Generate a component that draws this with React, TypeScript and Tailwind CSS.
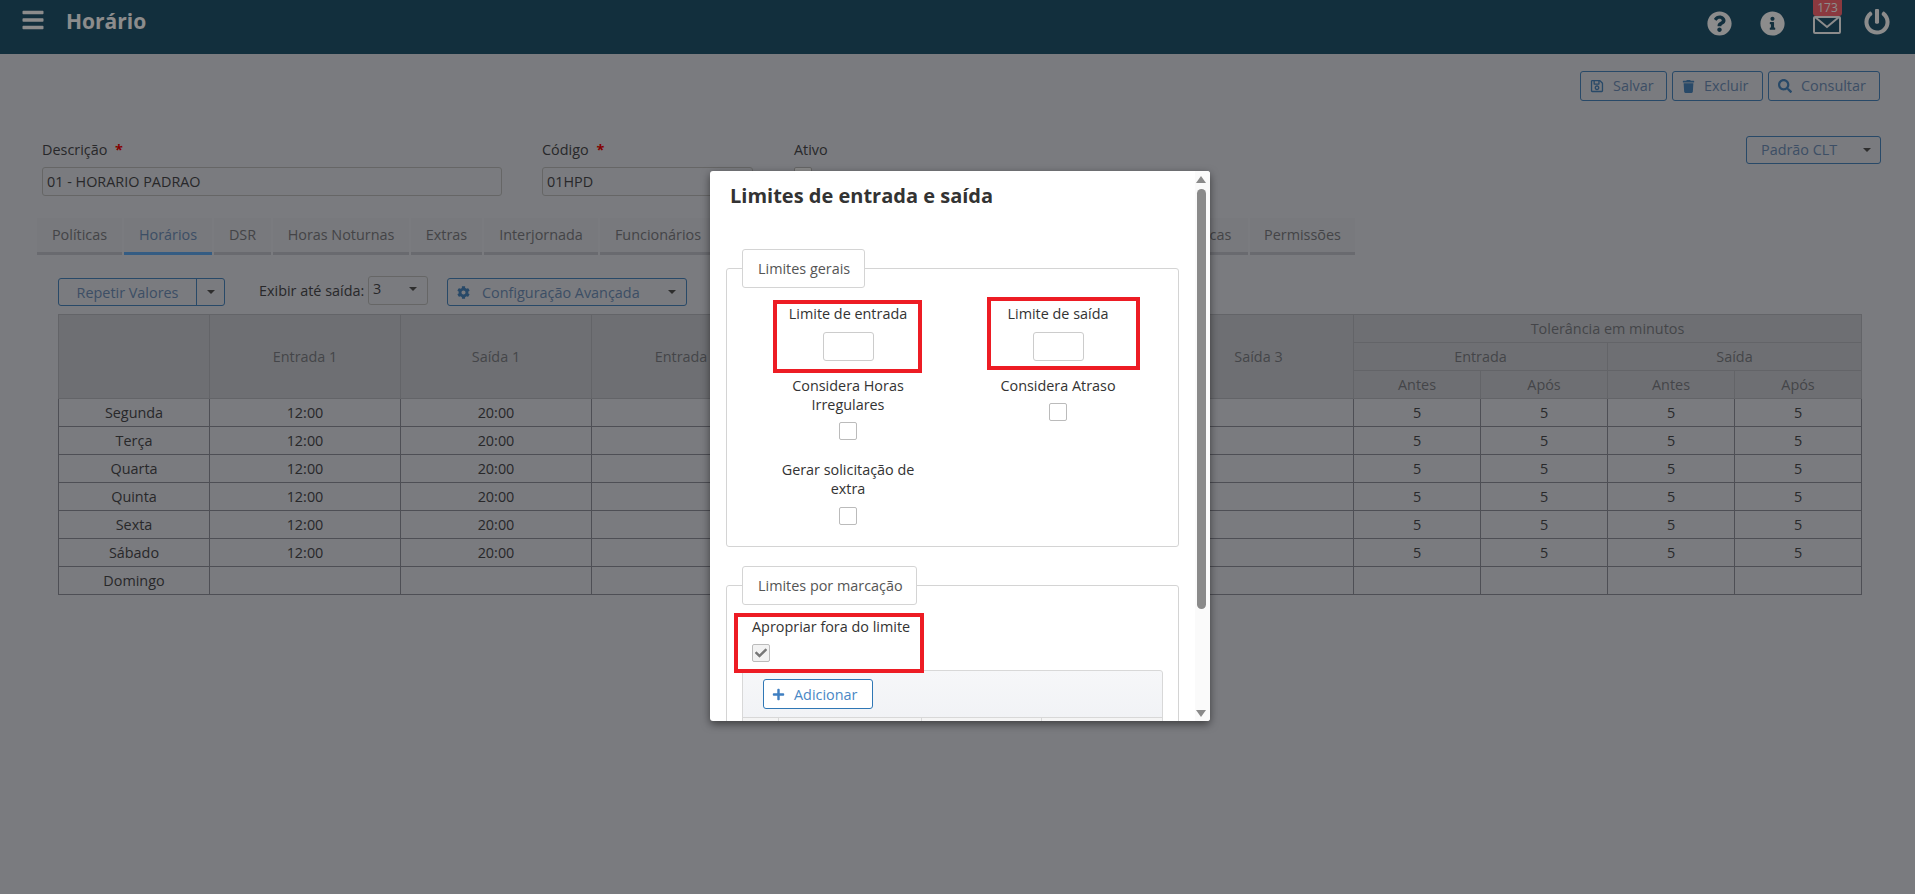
import { FaBars, FaCheck, FaCog, FaInfoCircle, FaPlus, FaPowerOff, FaQuestionCircle, FaRegSave, FaSearch, FaTrash } from "react-icons/fa";

const tabs = [
  { label: "Políticas", cls: "w-[85px]" },
  { label: "Horários", cls: "w-[88px]", active: true },
  { label: "DSR", cls: "w-[57px]" },
  { label: "Horas Noturnas", cls: "w-[136px]" },
  { label: "Extras", cls: "w-[71px]" },
  { label: "Interjornada", cls: "w-[114px]" },
  { label: "Funcionários", cls: "w-[116px]" },
  { label: "Tolerâncias", cls: "w-[130px]" },
  { label: "Compensação", cls: "w-[140px]" },
  { label: "Feriados", cls: "w-[99px]" },
  { label: "Regras Específicas", cls: "w-[155px]" },
  { label: "Permissões", cls: "w-[105px]" },
];

const rows = [
  ["Segunda", "12:00", "20:00", "5"],
  ["Terça", "12:00", "20:00", "5"],
  ["Quarta", "12:00", "20:00", "5"],
  ["Quinta", "12:00", "20:00", "5"],
  ["Sexta", "12:00", "20:00", "5"],
  ["Sábado", "12:00", "20:00", "5"],
  ["Domingo", "", "", ""],
];

function Caret() {
  return <span className="h-0 w-0 border-x-[4px] border-t-[4px] border-x-transparent border-t-[#555]" />;
}

function OutlineButton({ icon, label, cls }: { icon: React.ReactNode; label: string; cls: string }) {
  return (
    <button className={`flex h-[30px] items-center gap-[9px] rounded-[3px] border border-[#4a85bd] pl-[9px] text-[14.4px] text-[#6f8fb8] ${cls}`}>
      <span className="text-[#4a85bd]">{icon}</span>
      {label}
    </button>
  );
}

function Checkbox({ checked }: { checked?: boolean }) {
  return (
    <span className={`flex h-[18px] w-[18px] items-center justify-center rounded-[2px] border border-[#bbb] ${checked ? "bg-[#f2f2f2]" : "bg-white"}`}>
      {checked && <FaCheck className="text-[12px] text-[#777]" />}
    </span>
  );
}

function Legend({ label, cls }: { label: string; cls: string }) {
  return (
    <div className={`absolute left-[15px] top-[-20px] flex h-[39px] items-center rounded-[3px] border border-[#d4d4d4] bg-white pl-[15px] text-[14.4px] text-[#555] ${cls}`}>
      {label}
    </div>
  );
}

function Modal() {
  return (
    <div className="absolute left-[710px] top-[171px] h-[550px] w-[500px] overflow-hidden rounded-[3px] bg-white text-[14.4px] leading-[19px] text-[#333] shadow-[0_3px_9px_rgba(0,0,0,0.5)]">
      <div className="pl-[16px] pr-[31px]">
        <h2 className="pl-[4px] pt-[12px] text-[20px] font-bold leading-[26px] text-[#333]">Limites de entrada e saída</h2>

        <div className="relative mt-[59px] h-[279px] rounded-[3px] border border-[#d4d4d4]">
          <Legend label="Limites gerais" cls="w-[123px]" />
          <div className="grid grid-cols-[210px_210px] pl-[16px] pt-[35px] text-center">
            <div className="flex flex-col items-center">
              <span>Limite de entrada</span>
              <span className="mt-[9px] h-[29px] w-[51px] rounded-[3px] border border-[#ccc]" />
            </div>
            <div className="flex flex-col items-center">
              <span>Limite de saída</span>
              <span className="mt-[9px] h-[29px] w-[51px] rounded-[3px] border border-[#ccc]" />
            </div>
            <div className="mt-[15px] flex flex-col items-center">
              <span className="w-[160px]">Considera Horas Irregulares</span>
              <span className="mt-[8px]"><Checkbox /></span>
            </div>
            <div className="mt-[15px] flex flex-col items-center">
              <span>Considera Atraso</span>
              <span className="mt-[8px]"><Checkbox /></span>
            </div>
            <div className="mt-[20px] flex flex-col items-center">
              <span className="w-[160px]">Gerar solicitação de extra</span>
              <span className="mt-[9px]"><Checkbox /></span>
            </div>
          </div>
        </div>

        <div className="relative mt-[38px] h-[200px] rounded-[3px] border border-[#d4d4d4]">
          <Legend label="Limites por marcação" cls="w-[175px]" />
          <div className="pl-[25px] pt-[31px]">
            <div>Apropriar fora do limite</div>
            <div className="mt-[8px]"><Checkbox checked /></div>
          </div>
          <div className="absolute left-[15px] top-[84px] h-[100px] w-[421px] rounded-t-[3px] border border-[#d8d8d8] bg-gradient-to-b from-[#f6f7f9] to-[#eceef2]">
            <button className="ml-[20px] mt-[8px] flex h-[30px] w-[110px] items-center gap-[9px] rounded-[3px] border border-[#2f77b5] bg-white pl-[8px] text-[#4a87c5]">
              <FaPlus className="text-[13px] text-[#3f7fc1]" />
              Adicionar
            </button>
            <div className="mt-[8px] grid h-[40px] grid-cols-[36px_143px_120px_1fr] border-t border-[#d8d8d8] bg-[#f4f4f4]">
              <span className="border-r border-[#d8d8d8]" />
              <span className="border-r border-[#d8d8d8]" />
              <span className="border-r border-[#d8d8d8]" />
              <span />
            </div>
          </div>
        </div>
      </div>

      {/* red highlights drawn on top of the screenshot */}
      <div className="absolute left-[63px] top-[129px] h-[73px] w-[149px] border-4 border-[#ed1c24]" />
      <div className="absolute left-[277px] top-[126px] h-[73px] w-[153px] border-4 border-[#ed1c24]" />
      <div className="absolute left-[24px] top-[442px] h-[60px] w-[190px] border-4 border-[#ed1c24]" />

      {/* scrollbar */}
      <div className="absolute bottom-0 right-0 top-0 flex w-[15px] flex-col items-center bg-[#fafafa] pr-[3px]">
        <span className="mt-[5px] h-0 w-0 border-x-[5px] border-b-[7px] border-x-transparent border-b-[#8a8a8a]" />
        <span className="mt-[6px] h-[420px] w-[9px] rounded-[5px] bg-[#8a8a8a]" />
        <span className="mt-[101px] h-0 w-0 border-x-[5px] border-t-[7px] border-x-transparent border-t-[#8a8a8a]" />
      </div>
    </div>
  );
}

export default function App() {
  return (
    <div className="relative h-[894px] w-full overflow-hidden bg-[#dee0e7] font-['Open_Sans',sans-serif] text-[14.4px] text-[#4a4a4e]">
      <header className="flex h-[54px] items-start bg-[#225670] text-white">
        <FaBars className="ml-[21px] mt-[8px] text-[24px]" />
        <h1 className="ml-[21px] mt-[6px] text-[21px] font-bold leading-[30px]">Horário</h1>
        <div className="ml-auto flex items-start pr-[25px]">
          <FaQuestionCircle className="mt-[11px] text-[25px]" />
          <FaInfoCircle className="ml-[28px] mt-[11px] text-[25px]" />
          <div className="relative ml-[28px] h-[36px] w-[29px]">
            <svg viewBox="0 0 28 18" className="absolute left-0 top-[16px] h-[18px] w-[28px]" fill="none" stroke="currentColor" strokeWidth="2">
              <rect x="1" y="1" width="26" height="16" rx="1" />
              <path d="M2 1l12 10L26 1" />
            </svg>
            <span className="absolute left-0 top-0 h-[16px] w-[29px] rounded-b-[3px] bg-[#fd6973] text-center text-[12px] leading-[16px] text-white">173</span>
          </div>
          <FaPowerOff className="ml-[22px] mt-[9px] text-[26px]" />
        </div>
      </header>

      <div className="flex justify-end gap-[5px] pr-[35px] pt-[17px]">
        <OutlineButton icon={<FaRegSave className="text-[14px]" />} label="Salvar" cls="w-[87px]" />
        <OutlineButton icon={<FaTrash className="text-[13px]" />} label="Excluir" cls="w-[91px]" />
        <OutlineButton icon={<FaSearch className="text-[14px]" />} label="Consultar" cls="w-[112px]" />
      </div>

      <div className="flex items-start pl-[42px] pr-[34px] pt-[35px]">
        <div className="w-[460px] pt-[3px]">
          <label className="block leading-[21px]">Descrição <span className="ml-[4px] font-bold text-[#e00]">*</span></label>
          <div className="mt-[7px] flex h-[29px] items-center rounded-[3px] border border-[#bbb] pl-[4px]">01 - HORARIO PADRAO</div>
        </div>
        <div className="ml-[40px] w-[211px] pt-[3px]">
          <label className="block leading-[21px]">Código <span className="ml-[4px] font-bold text-[#e00]">*</span></label>
          <div className="mt-[7px] flex h-[29px] items-center rounded-[3px] border border-[#bbb] pl-[4px]">01HPD</div>
        </div>
        <div className="ml-[41px] pt-[3px]">
          <label className="block leading-[21px]">Ativo</label>
          <div className="mt-[7px]"><Checkbox /></div>
        </div>
        <button className="ml-auto flex h-[28px] w-[135px] items-center justify-between rounded-[3px] border border-[#4a85bd] pl-[14px] pr-[9px] text-[#6f8fb8]">
          Padrão CLT
          <Caret />
        </button>
      </div>

      <nav className="mt-[22px] flex gap-[2px] pl-[37px]">
        {tabs.map((t) => (
          <div
            key={t.label}
            className={`flex h-[37px] items-center justify-center border-b-[3px] bg-[#dadce3] ${t.cls} ${t.active ? "border-[#5fa8ee] text-[#6f8fb8]" : "border-[#c0c2ca] text-[#7c7d82]"}`}
          >
            {t.label}
          </div>
        ))}
      </nav>

      <div className="flex items-start pl-[58px] pt-[21px]">
        <div className="mt-[2px] flex h-[28px] w-[167px] rounded-[3px] border border-[#4a85bd] text-[#6f8fb8]">
          <span className="flex w-[138px] items-center justify-center border-r border-[#4a85bd] pt-[2px]">Repetir Valores</span>
          <span className="flex flex-1 items-center justify-center"><Caret /></span>
        </div>
        <span className="ml-[34px] mt-[4px] w-[105px] whitespace-nowrap leading-[21px]">Exibir até saída:</span>
        <div className="ml-[4px] flex h-[29px] w-[60px] items-center justify-between rounded-[3px] border border-[#bbb] pb-[3px] pl-[4px] pr-[10px]">
          3
          <Caret />
        </div>
        <div className="ml-[19px] mt-[2px] flex h-[28px] w-[240px] items-center rounded-[3px] border border-[#4a85bd] pl-[9px] pr-[10px] text-[#6f8fb8]">
          <FaCog className="text-[13px] text-[#4a85bd]" />
          <span className="ml-[12px] pt-[2px]">Configuração Avançada</span>
          <span className="ml-auto flex items-center"><Caret /></span>
        </div>
      </div>

      <div className="pl-[58px] pt-[8px]">
        <table className="w-[1803px] table-fixed border-collapse text-center leading-[20px]">
          <colgroup>
            <col className="w-[151px]" />
            <col className="w-[191px]" />
            <col className="w-[191px]" />
            <col className="w-[191px]" />
            <col className="w-[190px]" />
            <col className="w-[191px]" />
            <col className="w-[190px]" />
            <col className="w-[127px]" />
            <col className="w-[127px]" />
            <col className="w-[127px]" />
            <col className="w-[127px]" />
          </colgroup>
          <thead className="bg-[#c9cbd2] text-[#7d7f85]">
            <tr className="h-[28px]">
              <th rowSpan={3} className="border border-[#b4b6bd] font-normal" />
              {["Entrada 1", "Saída 1", "Entrada 2", "Saída 2", "Entrada 3", "Saída 3"].map((h) => (
                <th key={h} rowSpan={3} className="border border-[#b4b6bd] font-normal">{h}</th>
              ))}
              <th colSpan={4} className="border border-[#b4b6bd] font-normal">Tolerância em minutos</th>
            </tr>
            <tr className="h-[28px]">
              <th colSpan={2} className="border border-[#b4b6bd] font-normal">Entrada</th>
              <th colSpan={2} className="border border-[#b4b6bd] font-normal">Saída</th>
            </tr>
            <tr className="h-[28px]">
              {["Antes", "Após", "Antes", "Após"].map((h, i) => (
                <th key={i} className="border border-[#b4b6bd] font-normal">{h}</th>
              ))}
            </tr>
          </thead>
          <tbody>
            {rows.map(([day, inTime, outTime, tol]) => (
              <tr key={day} className="h-[28px]">
                <td className="border border-[#8e919b]">{day}</td>
                <td className="border border-[#8e919b]">{inTime}</td>
                <td className="border border-[#8e919b]">{outTime}</td>
                <td className="border border-[#8e919b]" />
                <td className="border border-[#8e919b]" />
                <td className="border border-[#8e919b]" />
                <td className="border border-[#8e919b]" />
                <td className="border border-[#8e919b]">{tol}</td>
                <td className="border border-[#8e919b]">{tol}</td>
                <td className="border border-[#8e919b]">{tol}</td>
                <td className="border border-[#8e919b]">{tol}</td>
              </tr>
            ))}
          </tbody>
        </table>
      </div>

      {/* modal backdrop */}
      <div className="absolute inset-0 bg-black/45" />
      <Modal />
    </div>
  );
}
